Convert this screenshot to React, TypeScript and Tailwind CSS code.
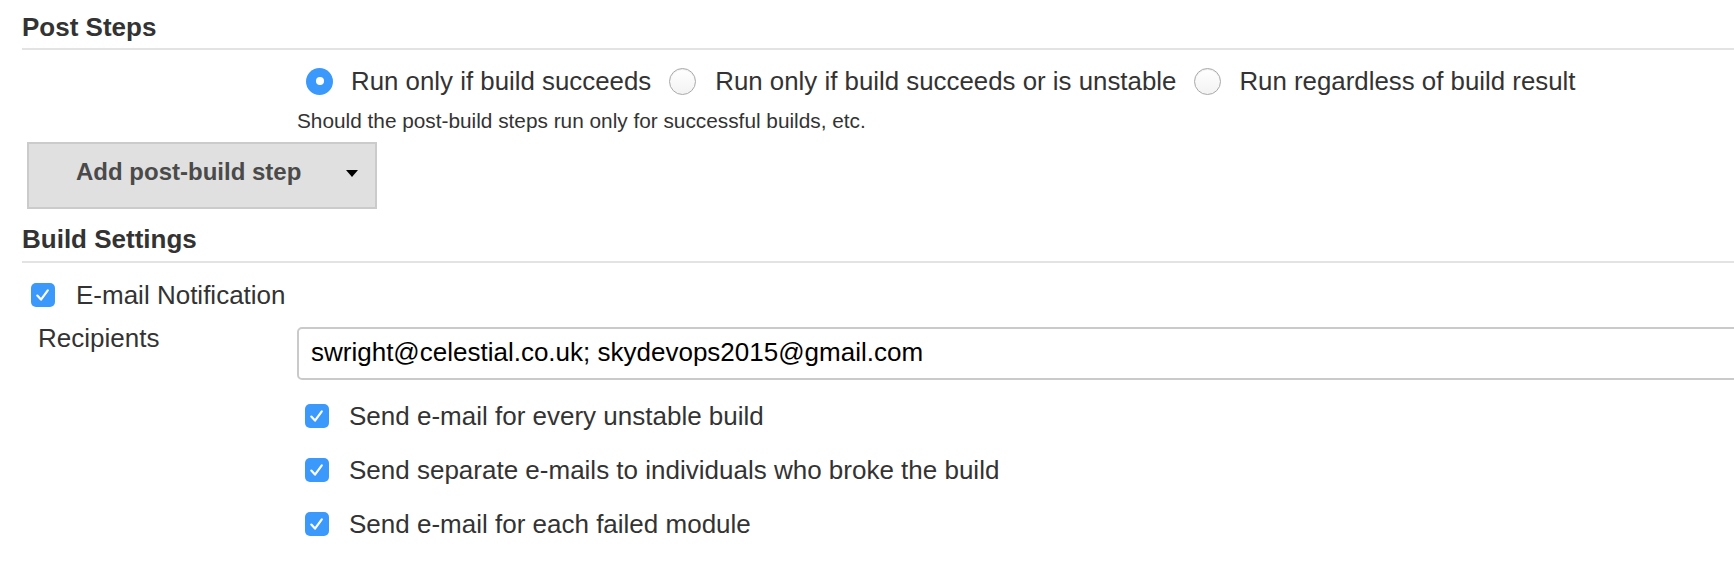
import React from "react";

function Radio({ checked }: { checked?: boolean }) {
  if (checked) {
    return (
      <span className="flex items-center justify-center w-[27px] h-[27px] rounded-full bg-[#3b99fc] shrink-0">
        <span className="w-[8px] h-[8px] rounded-full bg-white" />
      </span>
    );
  }
  return (
    <span className="block w-[27px] h-[27px] rounded-full border border-[#a9a9a9] bg-gradient-to-b from-white to-[#f3f3f3] shadow-[inset_0_1px_1px_rgba(0,0,0,0.08)] shrink-0" />
  );
}

function Check() {
  return (
    <span className="flex items-center justify-center w-[24px] h-[24px] rounded-[5px] bg-[#3b99fc] shrink-0">
      <svg width="24" height="24" viewBox="0 0 24 24" fill="none">
        <path
          d="M6.3 12.6 L10 16.6 L16.8 7.4"
          stroke="white"
          strokeWidth="2.2"
          strokeLinecap="round"
          strokeLinejoin="round"
        />
      </svg>
    </span>
  );
}

export default function App() {
  return (
    <div className="w-[1734px] h-[574px] overflow-hidden bg-white text-[#333333] font-['Liberation_Sans',Arial,sans-serif]">
      {/* Post Steps header */}
      <div className="ml-[22px] mt-[12px] pb-[6px] border-b-2 border-[#e3e3e3] text-[26px] leading-[30px] font-bold">
        Post Steps
      </div>

      {/* Radio row */}
      <div className="mt-[16px] pl-[306px] flex items-center text-[25.85px] leading-[30px] whitespace-nowrap">
        <Radio checked />
        <span className="ml-[18px]">Run only if build succeeds</span>
        <span className="ml-[18px]">
          <Radio />
        </span>
        <span className="ml-[19px]">Run only if build succeeds or is unstable</span>
        <span className="ml-[18px]">
          <Radio />
        </span>
        <span className="ml-[18px]">Run regardless of build result</span>
      </div>

      {/* Help text */}
      <div className="mt-[12px] pl-[297px] text-[20.8px] leading-[26px]">
        Should the post-build steps run only for successful builds, etc.
      </div>

      {/* Button */}
      <div className="mt-[8px] ml-[27px] w-[350px] h-[67px] border-2 border-[#cbcbcb] bg-[#e0e0e0] flex items-center pl-[47px] pr-[17px]">
        <span className="mb-[7px] text-[24px] leading-[28px] font-bold text-[#4a4a4a] whitespace-nowrap">
          Add post-build step
        </span>
        <svg className="ml-auto mb-[4px]" width="12" height="7" viewBox="0 0 12 7">
          <path d="M0 0 L12 0 L6 7 Z" fill="#000" />
        </svg>
      </div>

      {/* Build Settings header */}
      <div className="ml-[22px] mt-[15px] pb-[7px] border-b-2 border-[#e3e3e3] text-[26px] leading-[30px] font-bold">
        Build Settings
      </div>

      {/* E-mail Notification */}
      <div className="mt-[17px] pl-[31px] flex items-center text-[26px] leading-[30px]">
        <Check />
        <span className="ml-[21px]">E-mail Notification</span>
      </div>

      {/* Recipients */}
      <div className="mt-[13px] flex text-[26px] leading-[30px]">
        <div className="w-[297px] shrink-0 pl-[38px]">Recipients</div>
        <div className="mt-[4px] w-[1480px] shrink-0 h-[53px] border-2 border-[#cacaca] rounded-[5px] bg-white flex items-center pl-[12px] pb-[3px] text-black whitespace-nowrap">
          swright@celestial.co.uk; skydevops2015@gmail.com
        </div>
      </div>

      {/* Checkbox options */}
      <div className="mt-[21px] pl-[305px] flex flex-col gap-[24px] text-[26px] leading-[30px]">
        <div className="flex items-center h-[30px]">
          <Check />
          <span className="ml-[20px]">Send e-mail for every unstable build</span>
        </div>
        <div className="flex items-center h-[30px]">
          <Check />
          <span className="ml-[20px]">Send separate e-mails to individuals who broke the build</span>
        </div>
        <div className="flex items-center h-[30px]">
          <Check />
          <span className="ml-[20px]">Send e-mail for each failed module</span>
        </div>
      </div>
    </div>
  );
}
